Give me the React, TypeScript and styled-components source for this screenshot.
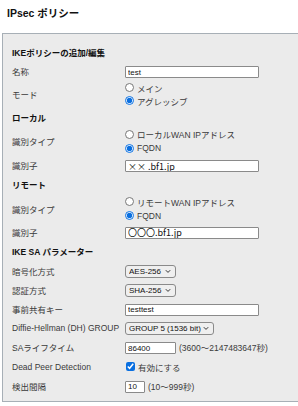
import React from 'react';
import styled, { createGlobalStyle } from 'styled-components';

const FONT = `'Liberation Sans', 'Noto Sans CJK JP', sans-serif`;

const GlobalStyle = createGlobalStyle`
	html, body {
		margin: 0;
		padding: 0;
		background: #ffffff;
		overflow: hidden;
	}
	body {
		font-family: ${FONT};
		color: #222;
	}
`;

const Page = styled.div`
	width: 298px;
	height: 406px;
	overflow: hidden;
`;

const Title = styled.h1`
	margin: 0;
	padding: 5px 0 0 7px;
	height: 28px;
	box-sizing: border-box;
	font-size: 10.5px;
	font-weight: bold;
	line-height: 16px;
	color: #111;
`;

const Panel = styled.div`
	margin: 5px 0 0 2px;
	width: 320px;
	height: 369px;
	box-sizing: border-box;
	background: #ebebeb;
	border: 1px solid #a7afb6;
	border-right: none;
	padding: 8px 0 5px 9px;
	font-size: 8.5px;
`;

const Heading = styled.div<{ $h: number }>`
	height: ${(p) => p.$h}px;
	display: flex;
	align-items: center;
	font-weight: bold;
	color: #111;
`;

const Row = styled.div<{ $h: number }>`
	height: ${(p) => p.$h}px;
	display: grid;
	grid-template-columns: 113px auto;
	align-items: center;
`;

const Label = styled.span`
	color: #3a3a3a;
	white-space: nowrap;
`;

const Field = styled.div`
	display: flex;
	align-items: center;
	gap: 3px;
`;

const RadioGroup = styled.div<{ $line: number }>`
	display: flex;
	flex-direction: column;
	label {
		height: ${(p) => p.$line}px;
	}
`;

const Option = styled.label`
	display: flex;
	align-items: center;
	gap: 3px;
	color: #3a3a3a;
	white-space: nowrap;
`;

const Radio = styled.input.attrs({ type: 'radio' })`
	width: 9px;
	height: 9px;
	margin: 0;
	accent-color: #0a6fe0;
`;

const Check = styled.input.attrs({ type: 'checkbox' })`
	width: 9px;
	height: 9px;
	margin: 0 0 0 1px;
	accent-color: #0a6fe0;
`;

const TextInput = styled.input<{ $w: number; $cjk?: boolean }>`
	width: ${(p) => p.$w}px;
	height: 12px;
	box-sizing: border-box;
	margin: 2px 0 0 0;
	padding: 0 2px;
	border: 1px solid #8a8a8a;
	border-radius: 1px;
	background: #fff;
	font-family: ${(p) => (p.$cjk ? `'Noto Sans CJK JP', sans-serif` : FONT)};
	font-size: ${(p) => (p.$cjk ? 9 : 8)}px;
	line-height: 10px;
	color: #111;
	outline: none;
`;

const SelectBox = styled.div<{ $w: number }>`
	position: relative;
	width: ${(p) => p.$w}px;
	height: 13px;
	margin-top: 1px;
	svg {
		position: absolute;
		right: 5px;
		top: 4px;
		pointer-events: none;
	}
`;

const Select = styled.select`
	appearance: none;
	width: 100%;
	height: 100%;
	box-sizing: border-box;
	margin: 0;
	padding: 0 0 0 3px;
	border: 1px solid #8a8a8a;
	border-radius: 3px;
	background: #efefef;
	font-family: ${FONT};
	font-size: 8px;
	color: #111;
	outline: none;
`;

const Note = styled.span`
	color: #3a3a3a;
	font-size: 8.5px;
	white-space: nowrap;
`;

const Chevron = () => (
	<svg width="6" height="5" viewBox="0 0 6 5">
		<path d="M0.8 1.2 L3 3.4 L5.2 1.2" fill="none" stroke="#333" strokeWidth="1" />
	</svg>
);

const Dropdown = ({ w, value }: { w: number; value: string }) => (
	<SelectBox $w={w}>
		<Select defaultValue={value}>
			<option value={value}>{value}</option>
		</Select>
		<Chevron />
	</SelectBox>
);

const R = 19.2;

const App = () => {
	return (
		<Page>
			<GlobalStyle />
			<Title>IPsec ポリシー</Title>
			<Panel>
				<Heading $h={20}>IKEポリシーの追加/編集</Heading>
				<Row $h={18}>
					<Label>名称</Label>
					<TextInput $w={134} defaultValue="test" />
				</Row>
				<Row $h={28}>
					<Label>モード</Label>
					<RadioGroup $line={13}>
						<Option>
							<Radio name="mode" />
							メイン
						</Option>
						<Option>
							<Radio name="mode" defaultChecked />
							アグレッシブ
						</Option>
					</RadioGroup>
				</Row>
				<Heading $h={18}>ローカル</Heading>
				<Row $h={30}>
					<Label>識別タイプ</Label>
					<RadioGroup $line={14}>
						<Option>
							<Radio name="ltype" />
							ローカルWAN IPアドレス
						</Option>
						<Option>
							<Radio name="ltype" defaultChecked />
							FQDN
						</Option>
					</RadioGroup>
				</Row>
				<Row $h={18}>
					<Label>識別子</Label>
					<TextInput $w={134} $cjk defaultValue="×× .bf1.jp" />
				</Row>
				<Heading $h={20}>リモート</Heading>
				<Row $h={29}>
					<Label>識別タイプ</Label>
					<RadioGroup $line={14}>
						<Option>
							<Radio name="rtype" />
							リモートWAN IPアドレス
						</Option>
						<Option>
							<Radio name="rtype" defaultChecked />
							FQDN
						</Option>
					</RadioGroup>
				</Row>
				<Row $h={17}>
					<Label>識別子</Label>
					<TextInput $w={134} $cjk defaultValue="〇〇〇.bf1.jp" />
				</Row>
				<Heading $h={21}>IKE SA パラメーター</Heading>
				<Row $h={R}>
					<Label>暗号化方式</Label>
					<Dropdown w={51} value="AES-256" />
				</Row>
				<Row $h={R}>
					<Label>認証方式</Label>
					<Dropdown w={51} value="SHA-256" />
				</Row>
				<Row $h={R}>
					<Label>事前共有キー</Label>
					<TextInput $w={134} defaultValue="testtest" />
				</Row>
				<Row $h={R}>
					<Label>Diffie-Hellman (DH) GROUP</Label>
					<Dropdown w={89} value="GROUP 5 (1536 bit)" />
				</Row>
				<Row $h={R}>
					<Label>SAライフタイム</Label>
					<Field>
						<TextInput $w={51} defaultValue="86400" />
						<Note>(3600～2147483647秒)</Note>
					</Field>
				</Row>
				<Row $h={R}>
					<Label>Dead Peer Detection</Label>
					<Option>
						<Check defaultChecked />
						有効にする
					</Option>
				</Row>
				<Row $h={R}>
					<Label>検出間隔</Label>
					<Field>
						<TextInput $w={20} defaultValue="10" />
						<Note>(10～999秒)</Note>
					</Field>
				</Row>
			</Panel>
		</Page>
	);
};

export default App;
